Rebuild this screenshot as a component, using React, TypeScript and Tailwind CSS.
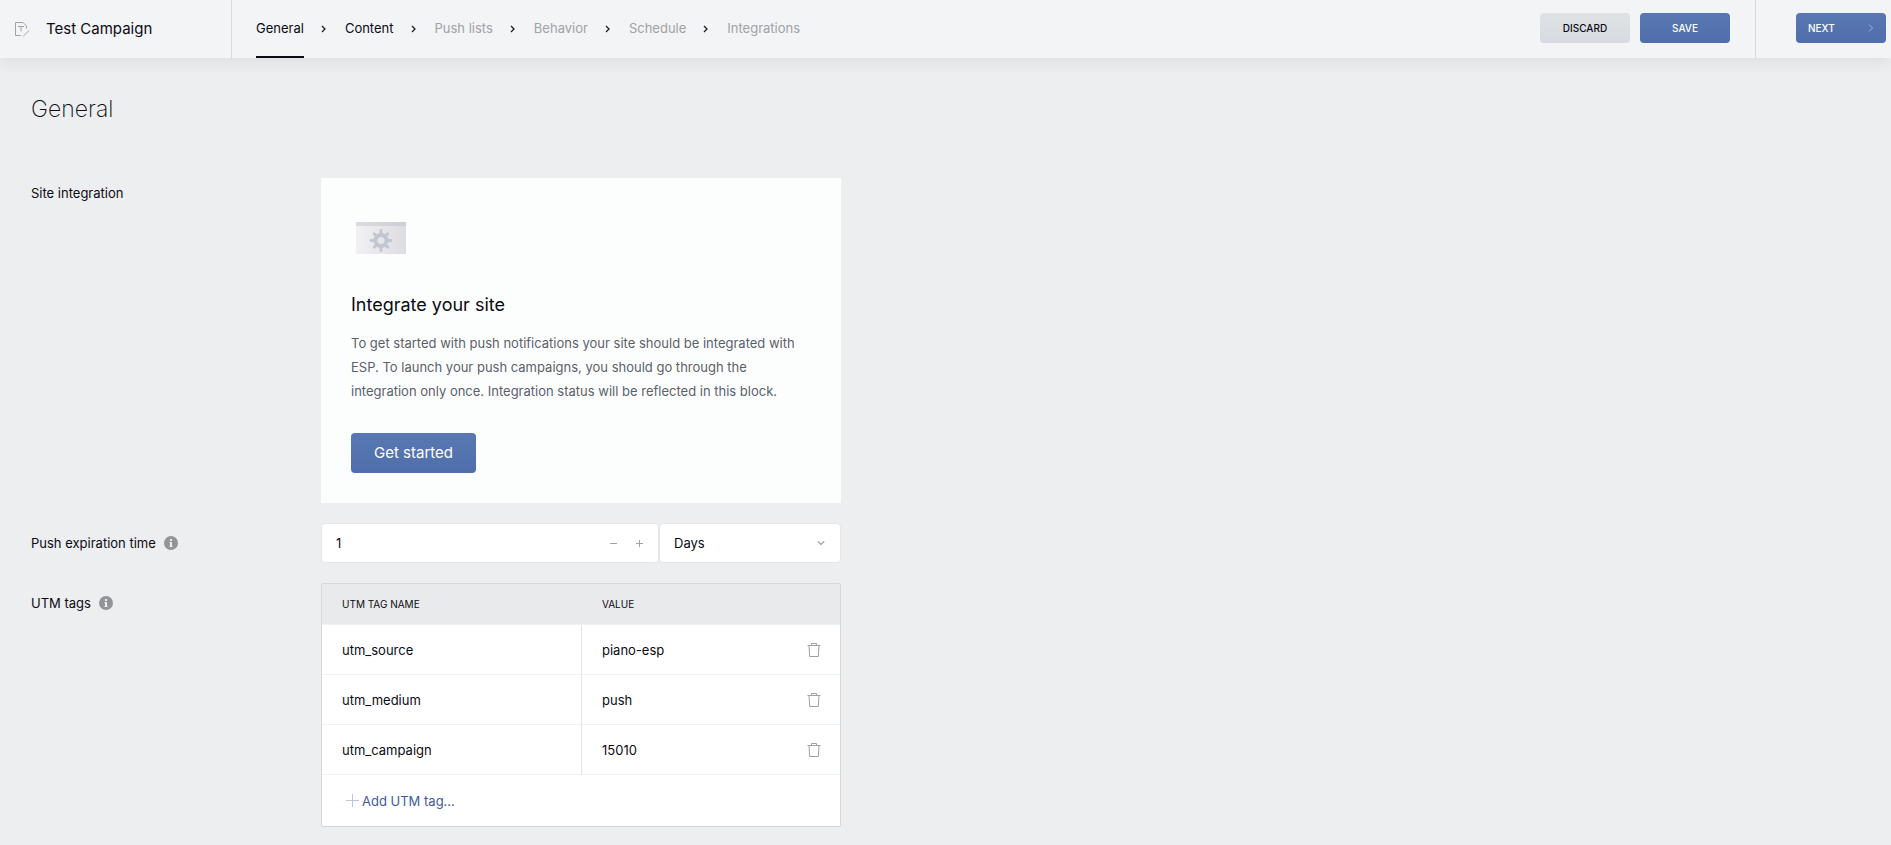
import { useState } from "react";

const steps = [
  { label: "General", state: "current" },
  { label: "Content", state: "open" },
  { label: "Push lists", state: "locked" },
  { label: "Behavior", state: "locked" },
  { label: "Schedule", state: "locked" },
  { label: "Integrations", state: "locked" },
];

const initialTags = [
  { name: "utm_source", value: "piano-esp" },
  { name: "utm_medium", value: "push" },
  { name: "utm_campaign", value: "15010" },
];

const stepStyles: Record<string, string> = {
  current: "border-[#0b0b14] text-[#0b0b14]",
  open: "border-transparent text-[#0b0b14]",
  locked: "border-transparent text-[#a0a2a5]",
};

function DraftIcon() {
  return (
    <svg className="h-4 w-4 shrink-0" viewBox="0 0 16 16" fill="none" stroke="#a0a2a5" aria-hidden="true">
      <path d="M7 14.5H1.500v-13H9L12.500 5v2.500M4 5.500h6M7 5.500v5M9 15.500l6-6" />
    </svg>
  );
}

function StepChevron() {
  return (
    <svg className="h-2 w-[41px] shrink-0" viewBox="0 0 41 8" fill="none" stroke="#1c1c24" strokeWidth="1.3" aria-hidden="true">
      <path d="M18 1l3 3-3 3" />
    </svg>
  );
}

function InfoIcon() {
  return (
    <svg className="h-3.5 w-3.5 shrink-0" viewBox="0 0 14 14" aria-hidden="true">
      <circle cx="7" cy="7" r="7" fill="#939496" />
      <path d="M6 3h2v2H6zM5.500 6H8v4h.5v1h-3v-1H6V7h-.5z" fill="#edeef0" />
    </svg>
  );
}

function SiteIcon() {
  return (
    <svg className="h-8 w-[50px]" viewBox="0 0 50 32" aria-hidden="true">
      <defs>
        <linearGradient id="pane">
          <stop offset="0" stopColor="#f1f1f4" />
          <stop offset="1" stopColor="#dcdce2" />
        </linearGradient>
        <linearGradient id="bar">
          <stop offset="0" stopColor="#dadae0" />
          <stop offset="1" stopColor="#ceced8" />
        </linearGradient>
      </defs>
      <path d="M0 4h50v28H0z" fill="url(#pane)" />
      <path d="M0 0h50v4H0z" fill="url(#bar)" />
      <g transform="translate(25 18.500)" stroke="#c3c5cf">
        <circle r="5.600" fill="none" strokeWidth="4" />
        <path
          d="M0-7v-3M0 7v3M-7 0h-3M7 0h3M5-5l1.800-1.800M-5-5l-1.800-1.800M5 5l1.800 1.800M-5 5l-1.800 1.800"
          strokeWidth="2.800"
          strokeLinecap="round"
        />
      </g>
    </svg>
  );
}

function TrashIcon() {
  return (
    <svg className="h-3.5 w-3.5" viewBox="0 0 14 14" fill="none" stroke="#a0a0a2" aria-hidden="true">
      <path d="M.5 2.500h13M4.500 2.500v-2h5v2M2 2.500l.7 11h8.600l.7-11" />
    </svg>
  );
}

export default function App() {
  const [amount, setAmount] = useState("1");
  const [tags, setTags] = useState(initialTags);
  const step = (by: number) => setAmount(String(Math.max(0, (parseInt(amount, 10) || 0) + by)));

  return (
    <div className="min-h-screen bg-[#edeef0] font-['Inter',sans-serif] text-[13px] leading-5 text-[#0b0b14]">
      <header className="flex h-[58px] items-stretch bg-[#f3f4f6] shadow-[0_4px_14px_rgba(30,35,45,0.08)]">
        <div className="flex w-[232px] shrink-0 items-center gap-4 border-r border-[#d8dadd] pl-3.5">
          <DraftIcon />
          <span className="text-[15px]">Test Campaign</span>
        </div>
        <nav aria-label="Campaign steps" className="flex grow items-stretch pl-6">
          {steps.map((item, index) => (
            <div key={item.label} className="flex items-center">
              {index > 0 && <StepChevron />}
              <a
                href={"#" + item.label.toLowerCase().replace(" ", "-")}
                aria-current={item.state === "current" ? "step" : undefined}
                className={"flex h-full items-center border-b-2 whitespace-nowrap " + stepStyles[item.state]}
              >
                {item.label}
              </a>
            </div>
          ))}
        </nav>
        <div className="flex items-start gap-2.5 pt-[13px] pr-[25px] text-[10px] font-medium">
          <button className="h-[30px] w-[90px] rounded bg-linear-to-b from-[#dfe2e5] to-[#d7dae0]">DISCARD</button>
          <button className="h-[30px] w-[90px] rounded bg-linear-to-b from-[#5878b3] to-[#4f6eab] text-white">
            SAVE
          </button>
        </div>
        <div className="border-l border-[#d8dadd] pt-[13px] pr-[5px] pl-10 text-[10px] font-medium">
          <button className="flex h-[30px] w-[90px] items-center justify-between rounded bg-linear-to-b from-[#5878b3] to-[#4f6eab] px-3 text-white">
            NEXT
            <svg className="h-2 w-1.5" viewBox="0 0 6 8" fill="none" stroke="#9bb1d8" aria-hidden="true">
              <path d="M1 .5L4.500 4 1 7.500" />
            </svg>
          </button>
        </div>
      </header>

      <main className="px-[31px] pt-[33px] pb-[18px]">
        <h1 className="mb-[51px] text-[23px] leading-9 font-extralight">General</h1>

        <div className="grid grid-cols-[290px_minmax(0,520px)] gap-y-5">
          <h2 className="pt-[5px]">Site integration</h2>
          <section className="bg-[#fcfefd] px-[30px] pt-11 pb-[30px]">
            <div className="pl-[5px]">
              <SiteIcon />
            </div>
            <h3 className="mt-[39px] text-[18px] leading-6">Integrate your site</h3>
            <p className="mt-3.5 leading-6 text-[#5c5f6b]">
              To get started with push notifications your site should be integrated with ESP. To launch your push
              campaigns, you should go through the integration only once. Integration status will be reflected in this
              block.
            </p>
            <button className="mt-[30px] h-10 w-[125px] rounded bg-linear-to-b from-[#5878b3] to-[#4f6eab] text-[15px] text-white">
              Get started
            </button>
          </section>

          <label htmlFor="expiration" className="flex items-center gap-2 self-center">
            Push expiration time
            <InfoIcon />
          </label>
          <div className="flex h-10">
            <div className="flex grow items-center rounded border border-[#e5e6e8] bg-white pr-1.5">
              <input
                id="expiration"
                inputMode="numeric"
                value={amount}
                onChange={(event) => setAmount(event.target.value)}
                className="h-full min-w-0 grow bg-transparent px-3.5 outline-none"
              />
              <button aria-label="Decrease" onClick={() => step(-1)} className="flex h-6 w-[26px] items-center justify-center">
                <svg className="h-[7px] w-[7px]" viewBox="0 0 7 7" stroke="#a2a3a6" aria-hidden="true">
                  <path d="M0 3.500h7" />
                </svg>
              </button>
              <button aria-label="Increase" onClick={() => step(1)} className="flex h-6 w-[26px] items-center justify-center">
                <svg className="h-[7px] w-[7px]" viewBox="0 0 7 7" stroke="#a2a3a6" aria-hidden="true">
                  <path d="M0 3.500h7M3.500 0v7" />
                </svg>
              </button>
            </div>
            <div className="grid w-[182px] shrink-0 items-center rounded border border-[#e5e6e8] bg-white">
              <select
                aria-label="Expiration unit"
                className="col-start-1 row-start-1 h-full w-full appearance-none bg-transparent pl-3.5 outline-none"
              >
                <option>Days</option>
                <option>Hours</option>
              </select>
              <svg
                className="pointer-events-none col-start-1 row-start-1 mr-[15px] h-2 w-2 justify-self-end"
                viewBox="0 0 8 8"
                fill="none"
                stroke="#9c9da0"
                strokeWidth="1.2"
                aria-hidden="true"
              >
                <path d="M.8 2.300L4 5.500l3.200-3.200" />
              </svg>
            </div>
          </div>

          <h2 className="flex h-10 items-center gap-2">
            UTM tags
            <InfoIcon />
          </h2>
          <div className="rounded-xs border border-[#d5d7da] bg-white">
            <table className="w-full table-fixed border-separate border-spacing-0 text-left" aria-label="UTM tags">
              <thead className="bg-[#e9eaec] text-[10px]">
                <tr>
                  <th className="h-[41px] w-[260px] border-b border-[#f0f1f2] pl-5 font-normal">UTM TAG NAME</th>
                  <th className="h-[41px] border-b border-[#f0f1f2] pl-5 font-normal">VALUE</th>
                </tr>
              </thead>
              <tbody>
                {tags.map((tag) => (
                  <tr key={tag.name}>
                    <td className="h-[50px] border-r border-b border-r-[#e2e4e6] border-b-[#f0f1f2] pl-5">{tag.name}</td>
                    <td className="h-[50px] border-b border-[#f0f1f2] pr-[19px] pl-5">
                      <div className="flex items-center justify-between">
                        {tag.value}
                        <button
                          aria-label={"Delete " + tag.name}
                          onClick={() => setTags(tags.filter((other) => other !== tag))}
                        >
                          <TrashIcon />
                        </button>
                      </div>
                    </td>
                  </tr>
                ))}
              </tbody>
            </table>
            <button
              onClick={() => setTags([...tags, { name: "utm_tag_" + (tags.length + 1), value: "" }])}
              className="flex h-[51px] items-center gap-[3px] pl-6 text-[#3c5c9c]"
            >
              <svg className="h-[13px] w-[13px]" viewBox="0 0 13 13" stroke="#b9c6df" aria-hidden="true">
                <path d="M0 6.500h13M6.500 0v13" />
              </svg>
              Add UTM tag...
            </button>
          </div>
        </div>
      </main>
    </div>
  );
}
